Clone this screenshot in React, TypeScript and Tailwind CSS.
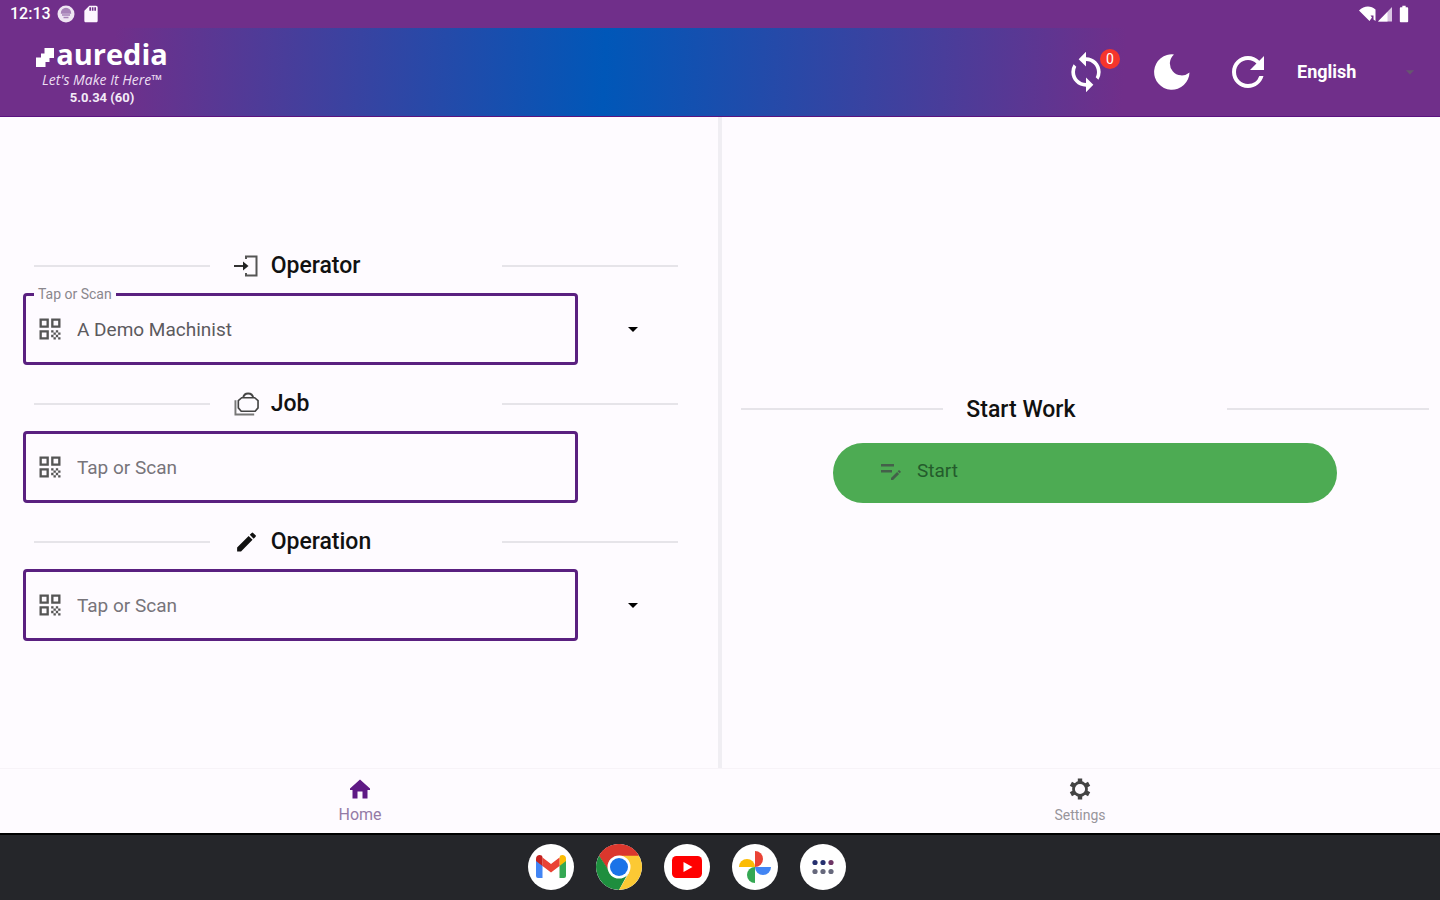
import type { ReactNode } from "react";
import {
  MdArrowDropDown,
  MdBatteryFull,
  MdEdit,
  MdQrCode,
  MdRefresh,
  MdSdCard,
  MdSync,
} from "react-icons/md";

function StatusBar() {
  return (
    <div className="flex h-7 items-center justify-between bg-[#702f8a] pr-[26px] pl-[10px] text-white">
      <div className="flex items-center gap-[6px]">
        <span className="text-base font-medium">12:13</span>
        <svg viewBox="0 0 18 18" className="size-[18px]" aria-hidden="true">
          <circle cx="9" cy="9" r="8.5" fill="#efe6f3" />
          <path d="M4.5 8a4.5 4.5 0 0 1 9 0zM5 10h8M6.5 12.5h5" fill="#a783b8" stroke="#a783b8" strokeWidth="1.3" />
        </svg>
        <MdSdCard className="size-5 text-[#fdf6ff]" aria-hidden="true" />
      </div>
      <div className="flex items-center">
        <svg viewBox="0 0 18 16" className="h-4 w-[18px]" aria-hidden="true">
          <path d="M0 4.5C5-.5 12-.5 16.500 3.500V15L14.500 13.500V9.500H11.500L13 11.500 10.500 15z" fill="#fff" />
        </svg>
        <svg viewBox="0 0 16 16" className="size-4" aria-hidden="true">
          <path d="M1 15.500 15 1v14.500z" fill="#d9c5e2" />
          <path d="M1 15.500 10.500 6v9.500z" fill="#fff" />
        </svg>
        <MdBatteryFull className="ml-px size-5" aria-hidden="true" />
      </div>
    </div>
  );
}

function Brand() {
  return (
    <div className="flex w-[134px] flex-col items-center">
      <div className="flex items-center gap-[2px]">
        <svg viewBox="0 0 18 20" className="mt-2 h-5 w-[18px] shrink-0" aria-hidden="true">
          <path d="M8.500 0H18V10H13.500V14H9.500V19H0V9.500H5V5.500H8.500z" fill="#fff" />
        </svg>
        <span className="font-['Open_Sans'] text-[29px] leading-9 font-bold">auredia</span>
      </div>
      <span className="font-['Open_Sans'] text-sm leading-4 whitespace-nowrap text-[#ecdff2] italic">
        Let's Make It Here™
      </span>
      <span className="text-[13px] leading-5 font-bold text-[#f3eaf7]">5.0.34 (60)</span>
    </div>
  );
}

function MoonIcon() {
  return (
    <svg viewBox="0 0 36 38" className="h-[38px] w-9" aria-hidden="true">
      <path d="M20 1.500A11.500 11.500 0 0 0 35.500 19.500 17.700 17.700 0 1 1 20 1.500z" fill="#fff" />
    </svg>
  );
}

function Header() {
  return (
    <header className="flex h-[89px] items-center justify-between border-b border-[#5b1380] bg-[linear-gradient(93deg,#702f8a_8%,#0057b8_42%,#702f8a_78%)] pr-6 pl-[35px] text-white">
      <Brand />
      <div className="flex items-center">
        <button aria-label="Sync" className="relative mr-[46px]">
          <MdSync className="size-11" />
          <span className="absolute -top-px -right-3 flex size-5 items-center justify-center rounded-full bg-[#f5352c] text-sm">
            0
          </span>
        </button>
        <button aria-label="Dark mode" className="mr-[34px]">
          <MoonIcon />
        </button>
        <button aria-label="Refresh" className="mr-[25px]">
          <MdRefresh className="size-12" />
        </button>
        <div className="relative w-[119px]">
          <select
            aria-label="Language"
            className="w-full appearance-none bg-transparent text-lg font-bold text-white outline-none"
          >
            <option>English</option>
          </select>
          <MdArrowDropDown className="pointer-events-none absolute top-1 -right-1 size-5 text-[#66566f]" />
        </div>
      </div>
    </header>
  );
}

function EnterIcon() {
  return (
    <svg viewBox="0 0 24 24" className="size-6" fill="none" aria-hidden="true">
      <path d="M12 5V2.500H22.500V21.500H12V19" stroke="#555" strokeWidth="2" />
      <path d="M0 12H12" stroke="#333" strokeWidth="2" />
      <path d="M9 7.500 14.500 12 9 16.500z" fill="#222" />
    </svg>
  );
}

function CaseIcon() {
  return (
    <svg viewBox="0 0 26 26" className="size-[26px]" fill="none" aria-hidden="true">
      <path d="M1.500 9V24H21" stroke="#777" strokeWidth="2" />
      <path d="M8 6.500H21.500L25 9.500V17L22 20.500H7.500L4.500 17V9.500z" stroke="#444" strokeWidth="1.700" />
      <path d="M9.500 6.500C10 3.500 12 2 14.700 2S19.500 3.500 20 6.500" stroke="#444" strokeWidth="2" />
    </svg>
  );
}

function HomeIcon() {
  return (
    <svg viewBox="0 0 24 24" className="size-6" fill="currentColor" aria-hidden="true">
      <path d="M12 2.500 22 11.500V13H19.500V21.500H14.500V14.500H9.500V21.500H4.500V13H2V11.500z" />
    </svg>
  );
}

function GearIcon() {
  return (
    <svg viewBox="0 0 24 24" className="size-6" fill="none" stroke="#444" aria-hidden="true">
      <circle cx="12" cy="12" r="6.500" strokeWidth="2.800" />
      <g strokeWidth="4.400">
        <path d="M12 1.500V5.500M12 18.500V22.500" />
        <path d="M2.900 6.750 6.370 8.750M17.630 15.250 21.100 17.250" />
        <path d="M2.900 17.250 6.370 15.250M17.630 8.750 21.100 6.750" />
      </g>
    </svg>
  );
}

function Rule() {
  return <div className="h-[2px] bg-[#e6e4e9]" />;
}

function SectionHeading({ icon, title }: { icon: ReactNode; title: string }) {
  return (
    <div className="mr-10 ml-[34px] grid h-8 grid-cols-[3fr_5fr_3fr] items-center">
      <Rule />
      <h2 className="flex items-center gap-3 pl-6 text-[23px] leading-[33px] font-medium text-[#111]">
        <span className="flex w-[25px] justify-center">{icon}</span>
        {title}
      </h2>
      <Rule />
    </div>
  );
}

type FieldProps = { id: string; title: string; icon: ReactNode; value?: string; dropdown?: boolean };

function ScanField({ id, title, icon, value, dropdown }: FieldProps) {
  return (
    <section className="flex flex-col gap-3">
      <SectionHeading icon={icon} title={title} />
      <div className="flex items-center pr-[73px] pl-[23px]">
        <div className="relative flex h-[72px] flex-1 items-center gap-[13px] rounded border-[3px] border-[#5a2080] pl-[10px]">
          {value && (
            <label
              htmlFor={id}
              className="absolute -top-[10px] left-2 bg-[#fefbff] px-1 text-sm leading-4 text-[#8a878d]"
            >
              Tap or Scan
            </label>
          )}
          <MdQrCode className="size-7 shrink-0 text-[#555]" aria-hidden="true" />
          <input
            id={id}
            aria-label={value ? undefined : `${title}: tap or scan`}
            defaultValue={value}
            placeholder="Tap or Scan"
            className="h-9 min-w-0 flex-1 bg-transparent text-[19px] text-[#5c5a5e] outline-none placeholder:text-[#77747a]"
          />
        </div>
        <div className="ml-[43px] w-6">
          {dropdown && (
            <button aria-label={`Choose ${title}`} className="block">
              <MdArrowDropDown className="size-6 text-black" />
            </button>
          )}
        </div>
      </div>
    </section>
  );
}

function StartPanel() {
  return (
    <section className="flex flex-1 flex-col justify-center gap-[18px] pt-[10px]">
      <div className="mr-[11px] ml-[19px] grid h-8 grid-cols-[5fr_7fr_5fr] items-center">
        <Rule />
        <h2 className="pl-[23px] text-[23px] leading-[33px] font-medium text-[#111]">Start Work</h2>
        <Rule />
      </div>
      <button className="mr-[103px] ml-[111px] flex h-[60px] items-center gap-[14px] rounded-full bg-[#4dab53] pb-[2px] pl-[46px] text-[19px] text-[#245b2c]">
        <svg viewBox="0 0 24 24" className="size-6" aria-hidden="true">
          <path
            fill="#44604a"
            d="M2,4V6.500H15V4H2M2,10V12.500H13V10H2M20.040,10.130C19.900,10.130 19.760,10.190 19.650,10.300L18.650,11.300L20.700,13.350L21.700,12.350C21.920,12.140 21.920,11.790 21.700,11.580L20.420,10.300C20.310,10.190 20.180,10.130 20.040,10.130M18.070,11.880L12,17.940V20H14.060L20.120,13.930L18.070,11.880Z"
          />
        </svg>
        Start
      </button>
    </section>
  );
}

function BottomNav() {
  return (
    <nav className="grid h-[65px] grid-cols-2 border-t border-[#f7f3f8]">
      <a href="#home" className="flex flex-col items-center pt-2 text-[#5f1a85]">
        <HomeIcon />
        <span className="text-base leading-7 text-[#947aa6]">Home</span>
      </a>
      <a href="#settings" className="flex flex-col items-center pt-2">
        <GearIcon />
        <span className="text-sm leading-7 text-[#98959b]">Settings</span>
      </a>
    </nav>
  );
}

function DockApp({ label, children }: { label: string; children: ReactNode }) {
  return (
    <button
      aria-label={label}
      className="flex size-[46px] items-center justify-center overflow-hidden rounded-full bg-white"
    >
      {children}
    </button>
  );
}

function Dock() {
  return (
    <footer className="flex h-[67px] items-center justify-center gap-[22px] border-t-2 border-black bg-[#25262a] pr-[66px] pb-[2px]">
      <DockApp label="Gmail">
        <svg viewBox="0 0 30 23" className="h-[23px] w-[30px]">
          <path d="M0 5V21a2 2 0 0 0 2 2H6.500V10z" fill="#4285f4" />
          <path d="M23.500 10V23H28a2 2 0 0 0 2-2V5z" fill="#34a853" />
          <path d="M23.500 3V11L30 6V3.500C30 .4 26.500-1 24 .8z" fill="#fbbc04" />
          <path d="M6.500 11V2.500L15 9l8.500-6.500V11L15 17.400z" fill="#ea4335" />
          <path d="M0 3.500V6l6.500 5V2.500L6 .8C3.500-1 0 .4 0 3.500z" fill="#c5221f" />
        </svg>
      </DockApp>
      <DockApp label="Chrome">
        <svg viewBox="0 0 46 46" className="size-[46px]">
          <path d="M23 23 3.080 11.500A23 23 0 0 1 42.920 11.500z" fill="#db372d" />
          <path d="M3.080 11.500A23 23 0 0 0 23 46L32.500 28.500 23 23 13.500 28.500z" fill="#1e8e3e" />
          <path d="M23 11.500H42.920A23 23 0 0 1 23 46L33 28.700z" fill="#fcc934" />
          <path d="M3.080 11.500 13.040 28.700 23 23V11.500z" fill="#1e8e3e" />
          <path d="M3.080 11.500A23 23 0 0 1 42.920 11.500H23L13 17.300 12 25z" fill="#db372d" />
          <circle cx="23" cy="23" r="11.500" fill="#fff" />
          <circle cx="23" cy="23" r="9" fill="#1a73e8" />
        </svg>
      </DockApp>
      <DockApp label="YouTube">
        <svg viewBox="0 0 32 24" className="h-6 w-8">
          <rect x="1" y="1" width="30" height="22" rx="4.500" fill="#f00" />
          <path d="M12.500 7v10l9-5z" fill="#fff" />
        </svg>
      </DockApp>
      <DockApp label="Photos">
        <svg viewBox="0 0 34 34" className="size-[34px]">
          <path d="M17 1a8 8 0 0 1 0 16z" fill="#ea4335" />
          <path d="M33 17a8 8 0 0 1-16 0z" fill="#4285f4" />
          <path d="M17 33a8 8 0 0 1 0-16z" fill="#34a853" />
          <path d="M1 17a8 8 0 0 1 16 0z" fill="#fbbc04" />
        </svg>
      </DockApp>
      <DockApp label="All apps">
        <svg viewBox="0 0 24 16" className="h-4 w-6">
          <g fill="#25306f">
            <circle cx="4" cy="3.500" r="2.600" />
            <circle cx="12" cy="3.500" r="2.600" />
            <circle cx="20" cy="3.500" r="2.600" fill="#6d3565" />
          </g>
          <g fill="#66687c">
            <circle cx="4" cy="12.500" r="2.600" />
            <circle cx="12" cy="12.500" r="2.600" />
            <circle cx="20" cy="12.500" r="2.600" />
          </g>
        </svg>
      </DockApp>
    </footer>
  );
}

export default function App() {
  return (
    <div className="flex min-h-screen flex-col bg-[#fefbff] font-[Roboto,sans-serif]">
      <StatusBar />
      <Header />
      <main className="flex flex-1">
        <div className="flex flex-1 flex-col justify-center gap-[22px] border-r-4 border-[#f0eef3] pt-[5px]">
          <ScanField id="operator" title="Operator" icon={<EnterIcon />} value="A Demo Machinist" dropdown />
          <ScanField id="job" title="Job" icon={<CaseIcon />} />
          <ScanField
            id="operation"
            title="Operation"
            icon={<MdEdit className="size-[26px]" aria-hidden="true" />}
            dropdown
          />
        </div>
        <StartPanel />
      </main>
      <BottomNav />
      <Dock />
    </div>
  );
}
